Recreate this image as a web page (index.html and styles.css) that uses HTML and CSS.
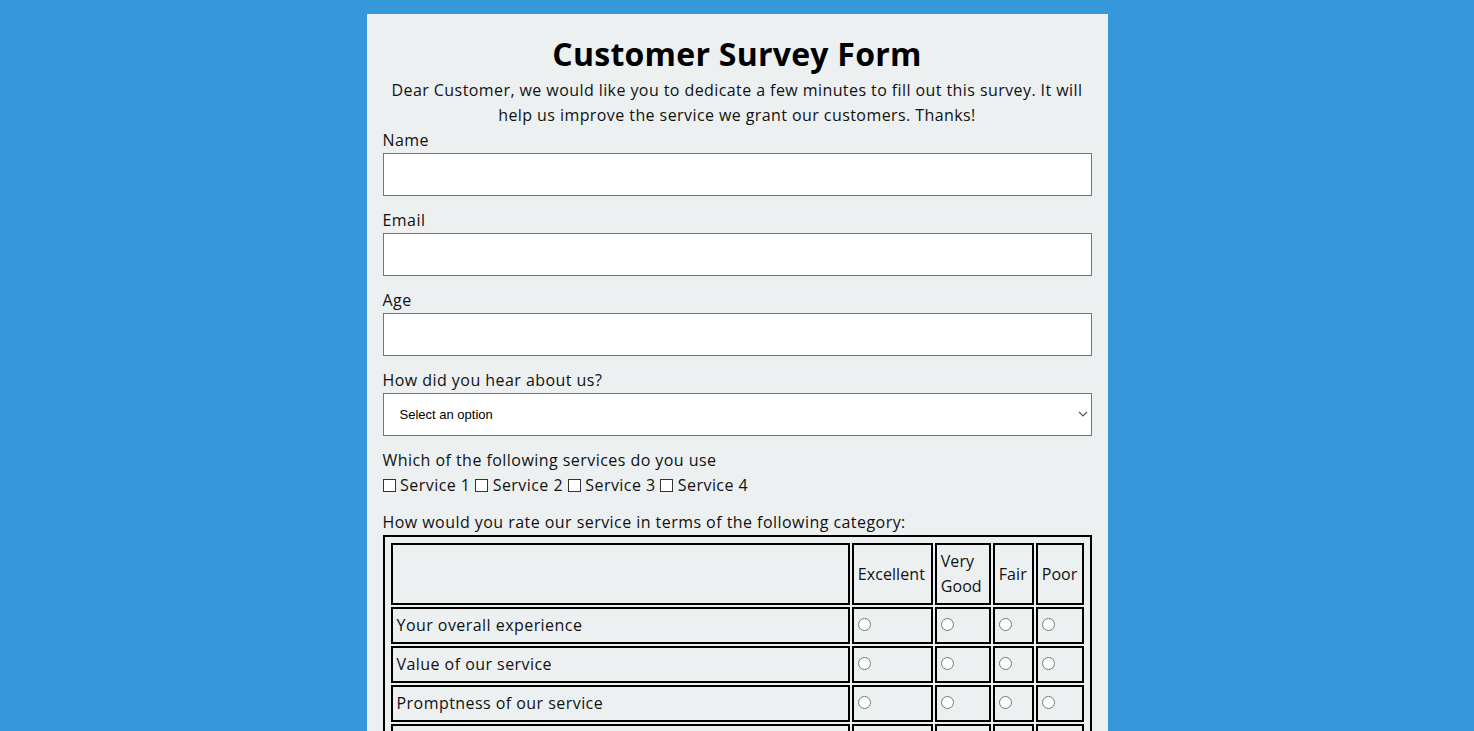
FILE: index.html
```html
<!DOCTYPE html>
<html lang="en">
<head>
<meta charset="utf-8">
<title>Customer Survey Form</title>
<link rel="stylesheet" href="styles.css">
</head>
<body>
<main class="card">
  <h1 class="title">Customer Survey Form</h1>
  <p class="intro">Dear Customer, we would like you to dedicate a few minutes to fill out this survey. It will help us improve the service we grant our customers. Thanks!</p>
  <form class="form">
    <div class="group">
      <label class="label" for="name">Name</label>
      <input class="field" id="name" type="text">
    </div>
    <div class="group">
      <label class="label" for="email">Email</label>
      <input class="field" id="email" type="email">
    </div>
    <div class="group">
      <label class="label" for="age">Age</label>
      <input class="field" id="age" type="number">
    </div>
    <div class="group">
      <label class="label" for="source">How did you hear about us?</label>
      <div class="select-wrap">
        <select class="field select" id="source">
          <option>Select an option</option>
          <option>Friends</option>
          <option>Internet</option>
          <option>Other</option>
        </select>
        <svg class="chevron" width="10" height="6" viewBox="0 0 10 6" aria-hidden="true"><path d="M1 1l4 4 4-4" fill="none" stroke="#555" stroke-width="1.2"/></svg>
      </div>
    </div>
    <div class="group">
      <div class="label">Which of the following services do you use</div>
      <div class="checks"><input class="check" type="checkbox" id="s1"> <label for="s1">Service 1</label> <input class="check" type="checkbox" id="s2"> <label for="s2">Service 2</label> <input class="check" type="checkbox" id="s3"> <label for="s3">Service 3</label> <input class="check" type="checkbox" id="s4"> <label for="s4">Service 4</label></div>
    </div>
    <div class="group">
      <div class="label">How would you rate our service in terms of the following category:</div>
      <div class="rating-box">
        <table class="rating">
          <thead>
            <tr><th class="cat"></th><th class="c1">Excellent</th><th class="c2">Very Good</th><th class="c3">Fair</th><th class="c4">Poor</th></tr>
          </thead>
          <tbody>
            <tr><td>Your overall experience</td><td><input class="radio" type="radio" name="r1"></td><td><input class="radio" type="radio" name="r1"></td><td><input class="radio" type="radio" name="r1"></td><td><input class="radio" type="radio" name="r1"></td></tr>
            <tr><td>Value of our service</td><td><input class="radio" type="radio" name="r2"></td><td><input class="radio" type="radio" name="r2"></td><td><input class="radio" type="radio" name="r2"></td><td><input class="radio" type="radio" name="r2"></td></tr>
            <tr><td>Promptness of our service</td><td><input class="radio" type="radio" name="r3"></td><td><input class="radio" type="radio" name="r3"></td><td><input class="radio" type="radio" name="r3"></td><td><input class="radio" type="radio" name="r3"></td></tr>
            <tr><td>Friendliness of our staff</td><td><input class="radio" type="radio" name="r4"></td><td><input class="radio" type="radio" name="r4"></td><td><input class="radio" type="radio" name="r4"></td><td><input class="radio" type="radio" name="r4"></td></tr>
          </tbody>
        </table>
      </div>
    </div>
    <div class="group">
      <label class="label" for="comments">Any comments or suggestions?</label>
      <textarea class="field area" id="comments"></textarea>
    </div>
    <button class="submit" type="submit">Submit</button>
  </form>
</main>
</body>
</html>
```
FILE: styles.css
```css
* { box-sizing: border-box; }
html, body { margin: 0; padding: 0; }
body {
  background: #3498db;
  font-family: "Open Sans", "Noto Sans", sans-serif;
  font-size: 16px;
  line-height: 25px;
  letter-spacing: 0.45px;
  color: #111;
}
.card {
  width: 741px;
  margin: 14px auto;
  padding: 16px;
  background: #ecf0f1;
}
.title {
  margin: 0;
  font-size: 32px;
  line-height: 48px;
  font-weight: 700;
  letter-spacing: 0.25px;
  text-align: center;
  color: #000;
}
.intro {
  margin: 0;
  text-align: center;
  letter-spacing: 0.42px;
}
.form { margin: 0; }
.group { margin-bottom: 12px; }
.label { display: block; }
.field {
  display: block;
  width: 100%;
  height: 43px;
  margin: 0;
  border: 1px solid #767676;
  border-radius: 0;
  background: #fff;
  font: inherit;
  padding: 0 12px;
}
.select-wrap { position: relative; }
.select {
  appearance: none;
  -webkit-appearance: none;
  padding: 0 16px;
  font-family: "Liberation Sans", Arial, sans-serif;
  font-size: 13px;
  letter-spacing: 0;
  color: #000;
}
.chevron {
  position: absolute;
  right: 4px;
  top: 18px;
  pointer-events: none;
}
.area { height: 120px; }
.checks { line-height: 25px; }
.check {
  appearance: none;
  -webkit-appearance: none;
  margin: 0;
  width: 13px;
  height: 13px;
  border: 1px solid #333;
  background: #fff;
  vertical-align: -1px;
}
.rating-box {
  border: 2px solid #000;
  padding: 4px;
}
.rating {
  width: 100%;
  border-spacing: 2px;
}
.rating th, .rating td {
  border: 2px solid #000;
  padding: 4px;
  font-weight: 400;
  text-align: left;
}
.rating th { letter-spacing: 0.1px; }
.rating .c1 { width: 81px; }
.rating .c2 { width: 56px; }
.rating .c3 { width: 41px; }
.rating .c4 { width: 47px; }
.radio { margin: 0; }
.submit {
  display: block;
  margin: 8px auto 0;
  padding: 10px 24px;
  font: inherit;
}
```
